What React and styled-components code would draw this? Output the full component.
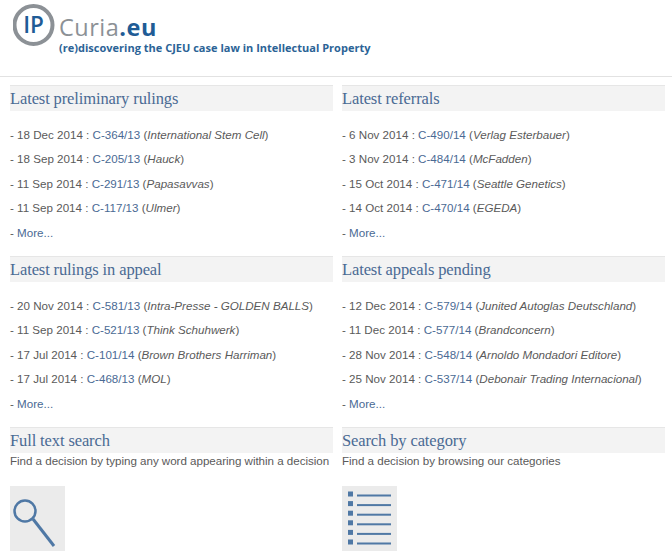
import styled, { createGlobalStyle } from "styled-components";

const GlobalStyle = createGlobalStyle`
  html, body {
    margin: 0;
    padding: 0;
    background: #fff;
    overflow: hidden;
  }
  body {
    font-family: "Liberation Sans", Arial, sans-serif;
    font-size: 11.6px;
    color: #5a5a5a;
  }
`;

const Page = styled.div`
  width: 672px;
  height: 555px;
  overflow: hidden;
`;

const Header = styled.header`
  height: 77px;
  box-sizing: border-box;
  padding: 3px 0 0 13px;
  border-bottom: 1px solid #e2e2e2;
`;

const LogoRow = styled.div`
  display: flex;
  align-items: flex-start;
  height: 38px;
`;

const LogoWord = styled.div`
  margin: 9px 0 0 4px;
  font-family: "Open Sans", sans-serif;
  font-size: 23.5px;
  line-height: 30px;
  letter-spacing: 0.5px;
  color: #8c9196;
  span {
    color: #1f5c96;
    font-weight: 700;
  }
`;

const Tagline = styled.div`
  margin-left: 46px;
  font-family: "Open Sans", sans-serif;
  font-size: 11px;
  font-weight: 700;
  line-height: 14px;
  letter-spacing: 0.01px;
  color: #2b6396;
`;

const Grid = styled.main`
  display: grid;
  grid-template-columns: 323px 323px;
  column-gap: 9px;
  padding: 8px 0 0 10px;
`;

const Section = styled.section`
  height: ${({ $height }) => $height || "171px"};
`;

const Heading = styled.h2`
  margin: 0;
  height: 26px;
  box-sizing: border-box;
  border-top: 1px solid #e6e6e6;
  background: #f3f3f3;
  font-family: "Liberation Serif", Georgia, serif;
  font-size: 16.5px;
  font-weight: 400;
  line-height: 25px;
  letter-spacing: -0.12px;
  color: #4a6a94;
`;

const List = styled.ul`
  list-style: none;
  margin: 12px 0 0;
  padding: 0;
`;

const Item = styled.li`
  height: 24.4px;
  line-height: 24.4px;
  white-space: nowrap;
  a {
    color: #4a6a94;
    text-decoration: none;
  }
  em {
    font-style: italic;
  }
`;

const Blurb = styled.p`
  margin: 0;
  height: 33px;
  line-height: 16px;
  letter-spacing: -0.03px;
  white-space: nowrap;
`;

const IconTile = styled.div`
  width: 55px;
  height: 65px;
  background: #ebebeb;
  svg {
    display: block;
  }
`;

const sections = [
  {
    title: "Latest preliminary rulings",
    rows: [
      ["18 Dec 2014", "C-364/13", "International Stem Cell"],
      ["18 Sep 2014", "C-205/13", "Hauck"],
      ["11 Sep 2014", "C-291/13", "Papasavvas"],
      ["11 Sep 2014", "C-117/13", "Ulmer"],
    ],
  },
  {
    title: "Latest referrals",
    rows: [
      ["6 Nov 2014", "C-490/14", "Verlag Esterbauer"],
      ["3 Nov 2014", "C-484/14", "McFadden"],
      ["15 Oct 2014", "C-471/14", "Seattle Genetics"],
      ["14 Oct 2014", "C-470/14", "EGEDA"],
    ],
  },
  {
    title: "Latest rulings in appeal",
    rows: [
      ["20 Nov 2014", "C-581/13", "Intra-Presse - GOLDEN BALLS"],
      ["11 Sep 2014", "C-521/13", "Think Schuhwerk"],
      ["17 Jul 2014", "C-101/14", "Brown Brothers Harriman"],
      ["17 Jul 2014", "C-468/13", "MOL"],
    ],
  },
  {
    title: "Latest appeals pending",
    rows: [
      ["12 Dec 2014", "C-579/14", "Junited Autoglas Deutschland"],
      ["11 Dec 2014", "C-577/14", "Brandconcern"],
      ["28 Nov 2014", "C-548/14", "Arnoldo Mondadori Editore"],
      ["25 Nov 2014", "C-537/14", "Debonair Trading Internacional"],
    ],
  },
];

const SearchIcon = () => (
  <svg width="55" height="65" viewBox="0 0 55 65" fill="none" stroke="#4f78a5">
    <circle cx="15" cy="25" r="10.5" strokeWidth="2.5" />
    <line x1="23" y1="33" x2="44" y2="60" strokeWidth="3" />
  </svg>
);

const ListIcon = () => (
  <svg width="55" height="65" viewBox="0 0 55 65">
    {[0, 1, 2, 3, 4, 5].map((i) => (
      <g key={i} fill="#4f78a5">
        <rect x="6" y={5.5 + i * 9.6} width="5" height="5" />
        <rect x="15" y={8.5 + i * 9.6} width="34" height="2" />
      </g>
    ))}
  </svg>
);

const App = () => (
  <Page>
    <GlobalStyle />
    <Header>
      <LogoRow>
        <svg width="42" height="44" viewBox="0 0 42 44">
          <circle cx="20.5" cy="22" r="19" fill="none" stroke="#8c9196" strokeWidth="4" />
          <text x="20.5" y="30" textAnchor="middle" fontFamily="Open Sans" fontSize="22.5" fontWeight="600" fill="#1f5c96">
            IP
          </text>
        </svg>
        <LogoWord>
          Curia<span>.eu</span>
        </LogoWord>
      </LogoRow>
      <Tagline>(re)discovering the CJEU case law in Intellectual Property</Tagline>
    </Header>
    <Grid>
      {sections.map(({ title, rows }) => (
        <Section key={title}>
          <Heading>{title}</Heading>
          <List>
            {rows.map(([date, ref, name]) => (
              <Item key={ref}>
                - {date} : <a href="#">{ref}</a> (<em>{name}</em>)
              </Item>
            ))}
            <Item>
              - <a href="#">More...</a>
            </Item>
          </List>
        </Section>
      ))}
      <Section $height="127px">
        <Heading>Full text search</Heading>
        <Blurb>Find a decision by typing any word appearing within a decision</Blurb>
        <IconTile>
          <SearchIcon />
        </IconTile>
      </Section>
      <Section $height="127px">
        <Heading>Search by category</Heading>
        <Blurb>Find a decision by browsing our categories</Blurb>
        <IconTile>
          <ListIcon />
        </IconTile>
      </Section>
    </Grid>
  </Page>
);

export default App;
